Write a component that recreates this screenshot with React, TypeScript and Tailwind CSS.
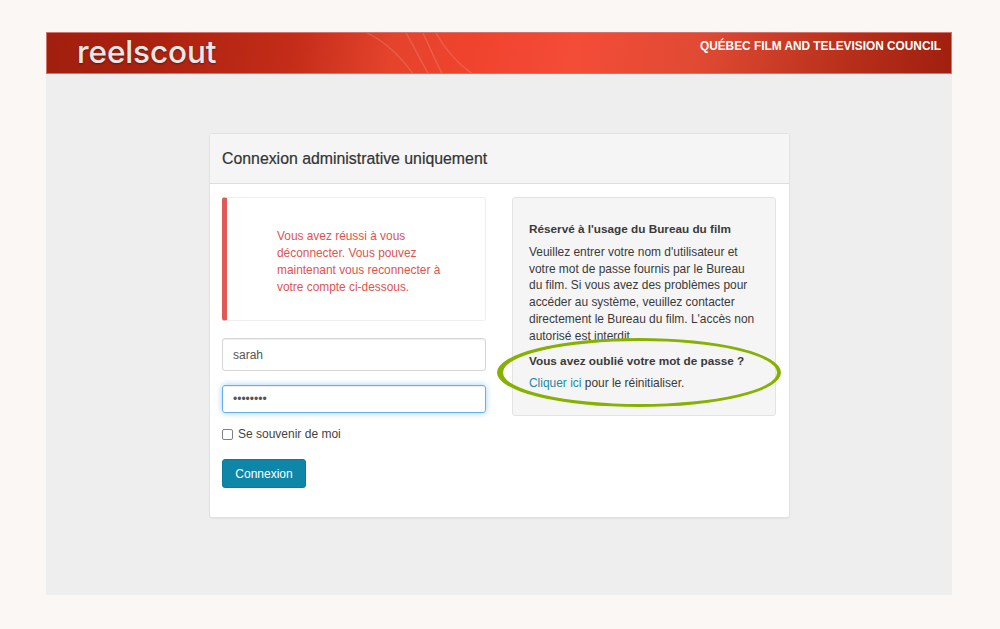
import * as React from 'react';

const sans = { fontFamily: '"Liberation Sans", Arial, sans-serif' };

export default function App() {
  return (
    <div className="h-[629px] bg-[#fbf7f5] px-[46px] pt-[32px] text-[#333333]" style={sans}>
      <div className="relative h-[563px] w-[906px] bg-[#eeeeee]">
        {/* Header */}
        <div className="relative flex h-[42px] justify-between overflow-hidden border border-[#d9706a] bg-[linear-gradient(100deg,#a11f0e_0%,#a8210f_10%,#c32c18_27%,#e4432c_38%,#f0432e_47%,#f44c37_58%,#e04a33_72%,#b8301b_88%,#a01f0e_100%)]">
          <svg className="absolute left-[320px] top-0 h-[42px] w-[130px]" viewBox="0 0 130 42" fill="none" stroke="#ffffff" strokeOpacity="0.14" strokeWidth="1.4">
            <path d="M0 0C18 8 36 26 47 42" />
            <path d="M39 0C46 12 54 28 62 42" />
            <path d="M56 0C62 12 68 28 76 42" />
            <path d="M69 0C78 16 92 32 107 42" />
          </svg>
          <span className="relative ml-[30px] font-['Inter'] text-[31.5px] font-medium leading-[38px] tracking-[-0.1px] text-[#e8e8e8] [text-shadow:0_1px_2px_rgba(0,0,0,0.4)]">
            reelscout
          </span>
          <span className="relative mr-[10px] mt-[6px] text-[11.85px] font-bold leading-[14px] text-white">
            QUÉBEC FILM AND TELEVISION COUNCIL
          </span>
        </div>

        {/* Login panel */}
        <div className="ml-[163px] mt-[59px] h-[385px] w-[581px] overflow-hidden rounded-[3px] border border-[#e2e2e2] bg-white shadow-[0_1px_1px_rgba(0,0,0,0.05)]">
          <div className="flex h-[50px] items-center border-b border-[#dddddd] bg-[#f5f5f5] px-[12px]">
            <h3 className="text-[15.85px] font-normal leading-[16px] text-[#333333] [-webkit-text-stroke:0.2px_#333333]">
              Connexion administrative uniquement
            </h3>
          </div>
          <div className="flex gap-[26px] px-[12px] pt-[13px]">
            {/* Left column */}
            <div className="w-[264px]">
              <div className="flex h-[124px] items-center rounded-[3px] border border-[#eeeeee] border-l-[5px] border-l-[#df5a57] pl-[50px] pr-[30px] pt-[6px]">
                <p className="text-[11.9px] leading-[16.8px] text-[#dd5450]">
                  Vous avez réussi à vous déconnecter. Vous pouvez maintenant vous reconnecter à votre compte ci-dessous.
                </p>
              </div>
              <input
                type="text"
                defaultValue="sarah"
                className="mt-[17px] block h-[33px] w-full rounded-[3px] border border-[#d6d6d6] px-[10px] text-[12px] text-[#555555] shadow-[inset_0_1px_1px_rgba(0,0,0,0.075)] outline-none"
              />
              <input
                type="password"
                defaultValue="password"
                className="mt-[14px] block h-[28px] w-full rounded-[3px] border border-[#66afe9] px-[10px] text-[12px] text-[#555555] shadow-[inset_0_1px_1px_rgba(0,0,0,0.075),0_0_6px_rgba(102,175,233,0.6)] outline-none"
              />
              <label className="mt-[13px] flex items-center gap-[5px] text-[12px] leading-[16px] text-[#444444]">
                <span className="h-[11px] w-[11px] rounded-[2px] border border-[#808080] bg-white" />
                Se souvenir de moi
              </label>
              <button className="mt-[17px] block h-[29px] w-[84px] rounded-[3px] border border-[#0c7a9c] bg-[#0e86a8] text-center text-[12px] leading-[16px] text-white">
                Connexion
              </button>
            </div>

            {/* Right column */}
            <div className="h-[219px] w-[264px] rounded-[3px] border border-[#e3e3e3] bg-[#f5f5f5] px-[16px] pt-[23px] text-[11.95px] leading-[16.8px] text-[#3a3a3a]">
              <p className="text-[11.75px] font-bold">Réservé à l'usage du Bureau du film</p>
              <p className="mt-[6px]">
                Veuillez entrer votre nom d'utilisateur et votre mot de passe fournis par le Bureau du film. Si vous avez des problèmes pour accéder au système, veuillez contacter directement le Bureau du film. L'accès non autorisé est interdit.
              </p>
              <p className="mt-[8px] text-[11.75px] font-bold">Vous avez oublié votre mot de passe ?</p>
              <p className="mt-[6px]">
                <a className="text-[#1a8aa8]">Cliquer ici</a> pour le réinitialiser.
              </p>
            </div>
          </div>
        </div>

        {/* Green highlight drawn over the panel */}
        <svg className="absolute left-[450px] top-[305px] h-[72px] w-[288px]" viewBox="0 0 288 72" fill="#86b100">
          <path
            fillRule="evenodd"
            d="M1 35.5A142 34.5 0 1 0 285 35.5A142 34.5 0 1 0 1 35.5ZM7 35.5A137 31.5 0 1 1 281 35.5A137 31.5 0 1 1 7 35.5Z"
          />
        </svg>
      </div>
    </div>
  );
}
